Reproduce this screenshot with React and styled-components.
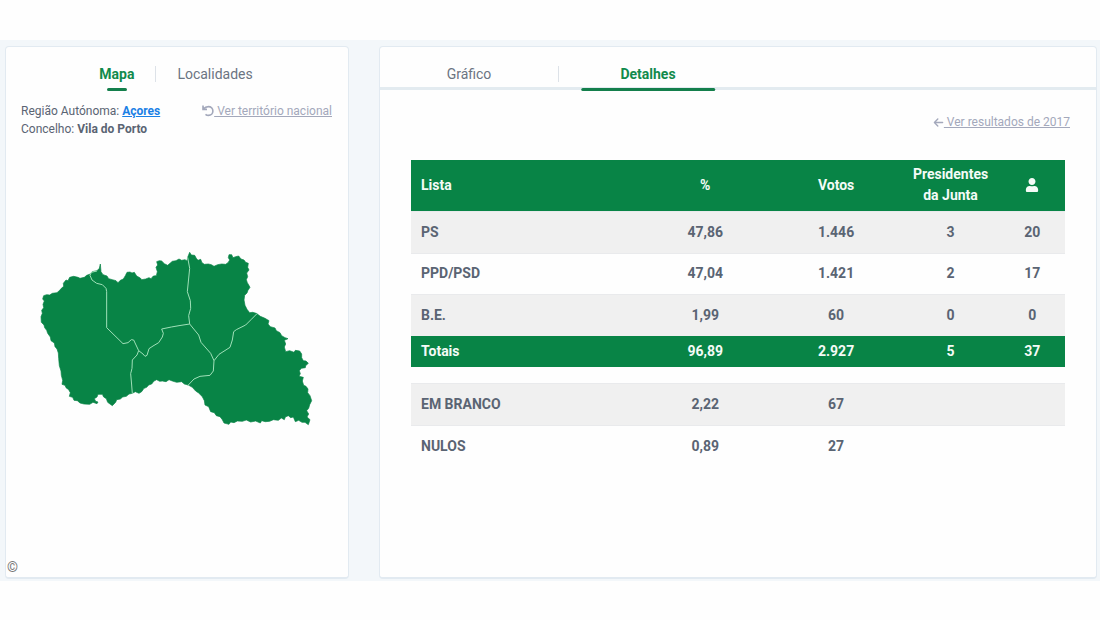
import React from "react";
import styled, { createGlobalStyle } from "styled-components";
import { FaUser } from "react-icons/fa";
import { FaArrowLeft } from "react-icons/fa6";

const green = "#088446";
const slate = "#5a6473";

const GlobalStyle = createGlobalStyle`
  *, *::before, *::after { box-sizing: border-box; }
  body {
    margin: 0;
    background: #fefefe;
    color: ${slate};
    font-family: Roboto, "Liberation Sans", sans-serif;
    font-size: 14px;
  }
`;

const Page = styled.div`
  display: flex;
  min-height: 100vh;
  padding: 40px 0 39px;
`;

const Band = styled.main`
  flex: 1;
  display: grid;
  grid-template-columns: minmax(0, 344fr) minmax(0, 718fr);
  gap: 30px;
  padding: 6px 3px 2px 5px;
  background: #f3f7fa;
`;

const Card = styled.section`
  display: flex;
  flex-direction: column;
  background: #fefefe;
  border: 1px solid #e2eaf1;
  border-bottom-width: 2px;
  border-radius: 4px;
`;

const MapTabs = styled.nav`
  display: flex;
  justify-content: center;
  align-items: flex-start;
  height: 43px;
  padding: 18px 2px 0 0;
`;

const ResultTabs = styled.nav`
  display: flex;
  align-items: flex-start;
  height: 43px;
  padding-top: 18px;
  border-bottom: 3px solid #e3ebf0;
`;

const Tab = styled.button`
  position: relative;
  flex: 0 1 ${(p) => (p.$wide ? "178px" : "auto")};
  height: 24px;
  padding: 0 ${(p) => (p.$wide ? "0" : "21px")};
  border: 0;
  background: none;
  font: inherit;
  font-weight: ${(p) => (p.$active ? 700 : 400)};
  line-height: 18px;
  color: ${(p) => (p.$active ? "#118a4c" : "#6b7482")};
  display: flex;
  justify-content: center;

  &::after {
    content: "";
    display: ${(p) => (p.$active ? "block" : "none")};
    position: absolute;
    top: 23px;
    left: 50%;
    transform: translateX(-50%);
    width: ${(p) => (p.$wide ? "75%" : "20px")};
    height: 3px;
    border-radius: 2px;
    background: #147f4c;
  }
`;

const Separator = styled.span`
  width: 1px;
  height: 16px;
  margin-top: 1px;
  background: #dde2e8;
`;

const Place = styled.div`
  display: flex;
  justify-content: space-between;
  padding: 12px 16px 0 15px;
  font-size: 12px;
  line-height: 18px;
`;

const PlaceLine = styled.div`
  white-space: nowrap;
`;

const RegionLink = styled.a`
  font-weight: 700;
  color: #1a80e5;
`;

const MutedLink = styled.a`
  display: flex;
  align-items: center;
  height: 18px;
  font-size: 12px;
  line-height: 18px;
  color: #a3a8bb;
  text-decoration: none;
  white-space: pre;

  span { text-decoration: underline; }
`;

const MapArea = styled.div`
  flex: 1;
  display: flex;
  justify-content: center;
  padding: 112px 17px 0 16px;
`;

const MapDrawing = styled.svg`
  width: 100%;
  max-width: 275px;
  height: 178px;
`;

const Credit = styled.footer`
  padding: 0 1px 2px;
  font-size: 14px;
  line-height: 16px;
  color: #777;
`;

const LinkRow = styled.div`
  display: flex;
  justify-content: flex-end;
  padding: 23px 26px 0;
`;

const Tables = styled.div`
  display: flex;
  flex-direction: column;
  gap: 16px;
  padding: 29px 31px 0;
`;

const Table = styled.table`
  width: 100%;
  table-layout: fixed;
  border-collapse: collapse;
  font-weight: 700;
  line-height: 21px;
`;

const Cell = styled.td`
  height: ${(p) => (p.$total ? "31px" : "41px")};
  padding: 0 10px;
  font-weight: 700;
  text-align: ${(p) => (p.$left ? "left" : "center")};
`;

const HeadCell = styled.th`
  width: ${(p) => p.$width};
  height: 51px;
  padding: 0 10px;
  text-align: ${(p) => (p.$left ? "left" : "center")};

  svg { display: block; margin: 0 auto; }
`;

const HeadRow = styled.tr`
  background: ${green};
  color: #f4fbf7;
`;

const Row = styled.tr`
  height: ${(p) => (p.$shaded ? "42px" : "41px")};
  background: ${(p) => (p.$shaded ? "#f0f0f0" : "transparent")};
  border-top: 1px solid #e9eaec;
`;

const TotalRow = styled.tr`
  background: ${green};
  color: #f4fbf7;
`;

const coast =
  "M36 215L40 205 38 196 44 188 42 178 46 168 41 162 44 152 53 149 62 150 70 145 84 143 92 136 97 130 104 124 103 115 111 105 117 107 122 97 134 94 147 97 153 100 166 97 173 91 184 87 190 80 204 77 211 70 214 57 216 80 222 89 234 93 239 101 250 104 261 107 267 113 274 106 283 102 289 92 294 82 303 81 309 84 316 82 323 93 334 99 338 104 350 102 360 98 366 101 373 93 382 92 385 80 381 67 386 60 383 50 391 47 398 48 406 56 416 61 424 54 430 49 441 47 450 42 458 46 468 44 474 48 476 37 482 22 487 30 497 31 502 40 507 46 515 43 519 53 526 58 538 57 547 59 555 64 566 59 578 57 590 58 597 53 602 45 598 38 600 29 608 29 612 38 620 35 629 33 636 42 645 45 650 52 658 55 656 67 660 75 653 84 656 95 652 104 655 113 663 127 657 136 654 144 647 151 645 165 648 181 654 193 662 203 671 202 682 205 694 214 708 220 720 227 717 237 724 245 738 249 742 257 753 263 758 272 768 278 777 281 766 286 770 297 766 306 770 320 782 317 795 322 799 316 812 318 818 327 818 338 823 347 831 348 838 355 830 362 829 368 817 370 811 377 814 386 810 394 823 397 820 408 824 421 831 424 837 432 836 443 843 452 848 467 842 479 839 490 833 497 839 507 834 516 843 524 838 539 828 532 819 532 809 526 799 530 793 516 785 518 778 512 769 516 766 524 757 519 748 526 733 524 722 529 709 530 698 527 694 534 680 528 665 531 652 525 640 529 625 528 615 533 605 531 600 538 585 534 580 524 573 515 562 512 556 503 545 500 539 485 528 480 526 467 520 455 509 444 500 438 490 427 478 420 466 417 458 410 443 412 430 408 420 404 411 410 400 408 392 409 383 404 375 408 368 417 359 420 353 427 345 430 338 440 330 445 319 440 310 445 300 447 292 454 281 456 274 462 263 464 260 472 250 482 243 477 236 472 232 461 224 456 220 448 207 448 204 456 196 461 200 469 207 471 204 476 192 472 182 478 165 477 153 474 145 467 135 466 131 457 121 454 124 443 119 434 111 428 108 421 99 418 101 406 97 391 96 378 91 362 89 340 88 324 84 312 78 305 76 294 66 287 64 276 56 265 53 256 47 248 45 240 37 232Z";

const borders = [
  "M204 78L187 82 183 91 189 105 203 115 220 119 231 130 233 140V248L282 296 297 293 307 284 314 285 329 317 342 327 348 334 354 331 360 311 372 303 389 293 400 276 403 265 398 252 427 246 450 242 482 237",
  "M329 317L324 330 310 345 309 370 305 386 308 420 310 446",
  "M476 37L482 70 480 90 475 140 484 167 485 190 479 212 482 237 509 270 516 292 545 325 555 347 553 378 543 391 513 394 495 402 476 422",
  "M555 347L570 328 603 307 610 285 614 260 622 254 650 240 667 223 684 206",
];

function ParishMap() {
  return (
    <MapDrawing viewBox="30 15 825 534" role="img" aria-label="Vila do Porto">
      <path d={coast} fill={green} stroke={green} strokeWidth="2" strokeLinejoin="round" />
      {borders.map((d) => (
        <path key={d} d={d} fill="none" stroke="#9fe0b8" strokeWidth="3" strokeLinejoin="round" />
      ))}
    </MapDrawing>
  );
}

function UndoIcon() {
  return (
    <svg width="12" height="12" viewBox="0 0 12 12" fill="none" stroke="currentColor" strokeWidth="1.6" aria-hidden="true">
      <path d="M1 0.6V4.400H5" />
      <path d="M1.400 4C2.800 2.300 4.500 1.600 6.400 1.600C9 1.600 10.900 3.500 10.900 6C10.900 8.600 9 10.400 6.500 10.400C5.300 10.400 4.300 10 3.500 9.300" />
      <path d="M1 1.200L4.200 4.400H1Z" fill="currentColor" stroke="none" />
    </svg>
  );
}

const results = [
  ["PS", "47,86", "1.446", "3", "20"],
  ["PPD/PSD", "47,04", "1.421", "2", "17"],
  ["B.E.", "1,99", "60", "0", "0"],
];
const totals = ["Totais", "96,89", "2.927", "5", "37"];
const others = [
  ["EM BRANCO", "2,22", "67", "", ""],
  ["NULOS", "0,89", "27", "", ""],
];
const widths = ["35%", "20%", "20%", "15%", "10%"];

function Cells({ values, total }) {
  return values.map((value, i) => (
    <Cell key={i} $left={i === 0} $total={total}>
      {value}
    </Cell>
  ));
}

function Rows({ data }) {
  return data.map((values, i) => (
    <Row key={values[0]} $shaded={i % 2 === 0}>
      <Cells values={values} />
    </Row>
  ));
}

export default function App() {
  return (
    <>
      <GlobalStyle />
      <Page>
        <Band>
          <Card>
            <MapTabs>
              <Tab type="button" $active>Mapa</Tab>
              <Separator />
              <Tab type="button">Localidades</Tab>
            </MapTabs>
            <Place>
              <div>
                <PlaceLine>
                  Região Autónoma: <RegionLink href="#acores">Açores</RegionLink>
                </PlaceLine>
                <PlaceLine>
                  Concelho: <b>Vila do Porto</b>
                </PlaceLine>
              </div>
              <MutedLink href="#nacional">
                <UndoIcon />
                <span> Ver território nacional</span>
              </MutedLink>
            </Place>
            <MapArea>
              <ParishMap />
            </MapArea>
            <Credit>©</Credit>
          </Card>
          <Card>
            <ResultTabs>
              <Tab type="button" $wide>Gráfico</Tab>
              <Separator />
              <Tab type="button" $wide $active>Detalhes</Tab>
            </ResultTabs>
            <LinkRow>
              <MutedLink href="#2017">
                <FaArrowLeft size={11} aria-hidden="true" />
                <span> Ver resultados de 2017</span>
              </MutedLink>
            </LinkRow>
            <Tables>
              <Table>
                <thead>
                  <HeadRow>
                    <HeadCell $width={widths[0]} $left>Lista</HeadCell>
                    <HeadCell $width={widths[1]}>%</HeadCell>
                    <HeadCell $width={widths[2]}>Votos</HeadCell>
                    <HeadCell $width={widths[3]}>Presidentes da Junta</HeadCell>
                    <HeadCell $width={widths[4]} aria-label="Mandatos">
                      <FaUser size={14} />
                    </HeadCell>
                  </HeadRow>
                </thead>
                <tbody>
                  <Rows data={results} />
                  <TotalRow>
                    <Cells values={totals} total />
                  </TotalRow>
                </tbody>
              </Table>
              <Table>
                <colgroup>
                  {widths.map((width, i) => (
                    <col key={i} width={width} />
                  ))}
                </colgroup>
                <tbody>
                  <Rows data={others} />
                </tbody>
              </Table>
            </Tables>
          </Card>
        </Band>
      </Page>
    </>
  );
}
